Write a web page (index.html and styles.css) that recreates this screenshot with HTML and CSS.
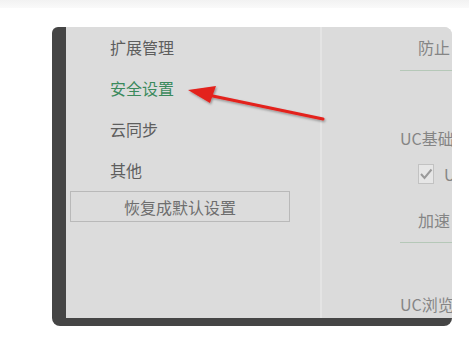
FILE: index.html
```html
<!DOCTYPE html>
<html lang="zh-CN">
<head>
    <meta charset="UTF-8">
    <title>设置</title>
    <link rel="stylesheet" href="styles.css">
</head>
<body>
    <div class="top-strip"></div>
    <div class="frame">
        <div class="sidebar">
            <div class="nav-item">扩展管理</div>
            <div class="nav-item active">安全设置</div>
            <div class="nav-item">云同步</div>
            <div class="nav-item">其他</div>
            <button class="reset-btn">恢复成默认设置</button>
        </div>
        <div class="divider"></div>
        <div class="panel">
            <div class="row indent first">防止</div>
            <div class="rule"></div>
            <div class="row section">UC基础</div>
            <div class="row indent check-row">
                <span class="checkbox">
                    <svg width="14" height="12" viewBox="0 0 14 12"><path d="M2 6 L5.5 10 L12.5 1.5" fill="none" stroke="#9a9a9a" stroke-width="2"/></svg>
                </span>
                <span>U</span>
            </div>
            <div class="row indent speed">加速</div>
            <div class="rule rule2"></div>
            <div class="row section last">UC浏览</div>
        </div>
    </div>

    <!-- annotation arrow -->
    <svg class="arrow" width="469" height="339" viewBox="0 0 469 339">
        <defs>
            <filter id="shadow" x="-10%" y="-50%" width="120%" height="200%">
                <feDropShadow dx="1" dy="1.5" stdDeviation="1" flood-color="#000" flood-opacity="0.35"/>
            </filter>
        </defs>
        <g filter="url(#shadow)">
            <line x1="323" y1="119" x2="208" y2="95" stroke="#e3211d" stroke-width="3" stroke-linecap="round"/>
            <polygon points="188,90 216,86 210,103" fill="#e3211d"/>
        </g>
    </svg>
</body>
</html>
```

FILE: styles.css
```css
body {
    margin: 0;
    background-color: #fff;
    font-family: "Noto Sans CJK SC", "Liberation Sans", sans-serif;
    position: relative;
    height: 339px;
    overflow: hidden;
}

.top-strip {
    height: 8px;
    background: linear-gradient(#f2f2f2, #fafafa);
}

.frame {
    margin: 19px 0 0 52px;
    width: 386px;
    height: 291px;
    display: flex;
    background-color: #dcdcdc;
    border-left: 14px solid #454545;
    border-bottom: 8px solid #454545;
    border-radius: 6px 8px 8px 8px;
    overflow: hidden;
}

.sidebar {
    width: 254px;
    flex-shrink: 0;
    display: flex;
    flex-direction: column;
}

.nav-item {
    height: 41px;
    line-height: 41px;
    padding-left: 44px;
    font-size: 16px;
    color: #5e5e5e;
}

.nav-item.active {
    color: #3b8a5c;
}

.reset-btn {
    margin: 0 0 0 4px;
    width: 220px;
    height: 31px;
    background-color: #dcdcdc;
    border: 1px solid #b9b9b9;
    font-family: inherit;
    font-size: 16px;
    color: #6e6e6e;
    padding: 0;
}

.divider {
    width: 2px;
    flex-shrink: 0;
    background-color: #e4e4e4;
    box-shadow: 1px 0 1px #d2d2d2;
}

.panel {
    flex: 1;
    min-width: 0;
    overflow: hidden;
    padding-left: 78px;
    background-color: #dbdbdb;
    white-space: nowrap;
    color: #858585;
    font-size: 16px;
}

.row {
    line-height: 20px;
}

.indent {
    padding-left: 18px;
}

.first {
    margin-top: 10px;
}

.rule {
    margin-top: 13px;
    height: 1px;
    background-color: #b5c8b8;
}

.section {
    margin-top: 57px;
}

.check-row {
    margin-top: 16px;
    display: flex;
    align-items: center;
    gap: 10px;
}

.checkbox {
    width: 18px;
    height: 18px;
    border: 1px solid #c2c2c2;
    background-color: #e6e6e6;
    display: flex;
    align-items: center;
    justify-content: center;
}

.speed {
    margin-top: 26px;
}

.rule2 {
    margin-top: 12px;
}

.last {
    margin-top: 51px;
}

.arrow {
    position: absolute;
    left: 0;
    top: 0;
}
```
